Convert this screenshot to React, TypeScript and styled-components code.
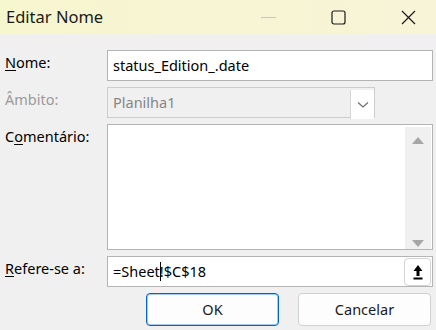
import React from 'react'
import styled, { createGlobalStyle } from 'styled-components'

const GlobalStyle = createGlobalStyle`
  html, body {
    margin: 0;
    padding: 0;
    background: #f0f0f0;
  }
  body {
    font-family: 'Noto Sans', 'Open Sans', sans-serif;
    color: #000;
  }
`

const Window = styled.div`
  width: 436px;
  height: 330px;
  display: flex;
  flex-direction: column;
  background: #f0f0f0;
  overflow: hidden;
`

const TitleBar = styled.div`
  height: 34px;
  display: flex;
  align-items: center;
  justify-content: space-between;
  padding: 0 20px 0 6px;
  background: linear-gradient(90deg, #f6f6cf, #f8f4d8);
  box-sizing: border-box;
`

const Title = styled.span`
  font-size: 16.5px;
  color: #1a1a1a;
  padding-bottom: 2px;
`

const Controls = styled.div`
  display: flex;
  align-items: center;
  gap: 55px;
`

const Body = styled.div`
  display: grid;
  grid-template-columns: 102px 1fr;
  grid-auto-rows: auto;
  row-gap: 6px;
  padding: 16px 3px 0 5px;
`

const Label = styled.div<{ $disabled?: boolean }>`
  font-size: 14.5px;
  line-height: 20px;
  padding-top: 2px;
  color: ${(p) => (p.$disabled ? '#9a9a9a' : '#000')};
  u {
    text-decoration-thickness: 1px;
    text-underline-offset: 2px;
  }
`

const Field = styled.div<{ $width?: string; $disabled?: boolean }>`
  position: relative;
  box-sizing: border-box;
  height: 31px;
  width: ${(p) => p.$width || '100%'};
  display: flex;
  align-items: center;
  padding: 0 0 2px 5px;
  border: 1px solid ${(p) => (p.$disabled ? '#cdcdcd' : '#b4b4b4')};
  background: ${(p) => (p.$disabled ? '#f0f0f0' : '#fff')};
  color: ${(p) => (p.$disabled ? '#868686' : '#000')};
  font-size: 14.5px;
  white-space: nowrap;
`

const FieldText = styled.span`
  flex: 1;
`

const DropButton = styled.div`
  width: 24px;
  height: 29px;
  box-sizing: border-box;
  margin: 2px 0 0;
  display: flex;
  align-items: center;
  justify-content: center;
  background: #fff;
  border-left: 1px solid #d6d6d6;
  align-self: stretch;
`

const Memo = styled.div`
  box-sizing: border-box;
  height: 126px;
  border: 1px solid #b4b4b4;
  background: #fff;
  display: flex;
  justify-content: flex-end;
  padding: 2px 0 0 0;
`

const ScrollTrack = styled.div`
  width: 26px;
  margin-right: 1px;
  background: #f0f0f0;
  display: flex;
  flex-direction: column;
  justify-content: space-between;
  align-items: center;
  padding: 10px 0 2px;
  box-sizing: border-box;
`

const Triangle = styled.div<{ $down?: boolean }>`
  width: 0;
  height: 0;
  border-left: 6px solid transparent;
  border-right: 6px solid transparent;
  ${(p) =>
    p.$down
      ? 'border-top: 7px solid #a6a6a6;'
      : 'border-bottom: 7px solid #a6a6a6;'}
`

const Caret = styled.span`
  display: inline-block;
  width: 1px;
  height: 19px;
  background: #000;
  vertical-align: -4px;
  margin-right: -1px;
`

const CollapseButton = styled.div`
  margin-left: auto;
  width: 27px;
  height: 28px;
  margin-right: 1px;
  margin-bottom: -2px;
  box-sizing: border-box;
  border: 1px solid #d3d3d3;
  border-radius: 4px;
  background: #fff;
  display: flex;
  align-items: center;
  justify-content: center;
`

const ButtonRow = styled.div`
  grid-column: 1 / 3;
  display: flex;
  justify-content: flex-end;
  gap: 19px;
  padding-right: 2px;
`

const Button = styled.div<{ $primary?: boolean }>`
  width: 133px;
  height: 33px;
  box-sizing: border-box;
  border-radius: 4px;
  background: #fdfdfd;
  display: flex;
  align-items: center;
  justify-content: center;
  font-size: 14.5px;
  color: #1a1a1a;
  padding-bottom: 2px;
  border: 1px solid ${(p) => (p.$primary ? '#0067c0' : '#d0d0d0')};
  box-shadow: ${(p) => (p.$primary ? 'inset 0 0 0 1px rgba(0, 103, 192, 0.35)' : 'none')};
`

const App = () => (
  <Window>
    <GlobalStyle />
    <TitleBar>
      <Title>Editar Nome</Title>
      <Controls>
        <svg width="15" height="15" viewBox="0 0 15 15">
          <line x1="0" y1="7.5" x2="15" y2="7.5" stroke="#c9c8b4" strokeWidth="1" />
        </svg>
        <svg width="15" height="15" viewBox="0 0 15 15">
          <rect x="1" y="1" width="13" height="13" rx="2" fill="none" stroke="#1a1a1a" strokeWidth="1.2" />
        </svg>
        <svg width="15" height="15" viewBox="0 0 15 15">
          <path d="M1 1 L14 14 M14 1 L1 14" stroke="#1a1a1a" strokeWidth="1.2" />
        </svg>
      </Controls>
    </TitleBar>
    <Body>
      <Label>
        <u>N</u>ome:
      </Label>
      <Field>
        <FieldText>status_Edition_.date</FieldText>
      </Field>

      <Label $disabled>Âmbito:</Label>
      <Field $width="268px" $disabled>
        <FieldText>Planilha1</FieldText>
        <DropButton>
          <svg width="12" height="8" viewBox="0 0 12 8">
            <path d="M1 1.5 L6 6 L11 1.5" fill="none" stroke="#6a6a6a" strokeWidth="1.1" />
          </svg>
        </DropButton>
      </Field>

      <Label>
        C<u>o</u>mentário:
      </Label>
      <Memo>
        <ScrollTrack>
          <Triangle />
          <Triangle $down />
        </ScrollTrack>
      </Memo>

      <Label>
        <u>R</u>efere-se a:
      </Label>
      <Field>
        <span>
          =Sheet<Caret />!$C$18
        </span>
        <CollapseButton>
          <svg width="12" height="16" viewBox="0 0 12 16">
            <path d="M6 1 L10.5 7 L7.5 7 L7.5 12 L4.5 12 L4.5 7 L1.5 7 Z" fill="#000" />
            <rect x="1.5" y="13.5" width="9" height="2" fill="#000" />
          </svg>
        </CollapseButton>
      </Field>

      <ButtonRow>
        <Button $primary>OK</Button>
        <Button>Cancelar</Button>
      </ButtonRow>
    </Body>
  </Window>
)

export default App
